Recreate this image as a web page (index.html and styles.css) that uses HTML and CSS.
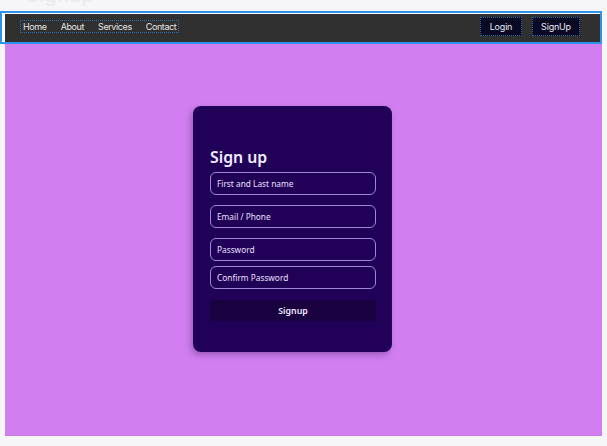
FILE: index.html
```html
<!DOCTYPE html>
<html>
<head>
<meta charset="utf-8">
<link rel="stylesheet" href="styles.css">
</head>
<body>
<div class="ghost"><span class="ghost-text">Signup</span></div>
<header class="header">
  <nav class="bar">
    <div class="links">
      <a class="link">Home</a>
      <a class="link">About</a>
      <a class="link">Services</a>
      <a class="link">Contact</a>
    </div>
    <div class="actions">
      <button class="nbtn nbtn-login">Login</button>
      <button class="nbtn nbtn-signup">SignUp</button>
    </div>
  </nav>
</header>
<main class="main">
  <form class="card">
    <h2 class="title">Sign up</h2>
    <div class="field">First and Last name</div>
    <div class="field f-gap">Email / Phone</div>
    <div class="field f-gap">Password</div>
    <div class="field f-gap2">Confirm Password</div>
    <div class="submit">Signup</div>
  </form>
</main>
</body>
</html>
```
FILE: styles.css
```css
html, body { margin: 0; padding: 0; }
body {
  background: #f6f6f8;
  width: 607px;
  height: 446px;
  overflow: hidden;
  font-family: Inter, "Liberation Sans", sans-serif;
}
.ghost {
  height: 11px;
  overflow: hidden;
  padding-left: 26px;
  display: flex;
  align-items: flex-end;
}
.ghost-text {
  font-size: 20px;
  line-height: 20px;
  margin-bottom: 6px;
  color: #ebebef;
  font-weight: 600;
}
.header {
  width: 602px;
  height: 33px;
  box-sizing: border-box;
  border: 2px solid #2f93ea;
  border-bottom-width: 2.5px;
  background: #fff;
  padding-left: 3px;
  display: flex;
}
.bar {
  flex: 1;
  background: #303030;
  display: flex;
  align-items: center;
  justify-content: space-between;
  padding: 0 20px 0 16px;
  margin-top: 1px;
}
.links {
  display: flex;
  gap: 14px;
  outline: 1px dotted #2c6ea8;
  padding: 0 2px;
  margin-top: -4px;
  height: 11px;
  align-items: center;
}
.link {
  color: #e4e4e4;
  font-size: 9px;
  letter-spacing: -0.4px;
}
.actions {
  display: flex;
  gap: 10px;
  margin-top: -4px;
}
.nbtn {
  font-family: Inter, "Liberation Sans", sans-serif;
  font-size: 9px;
  letter-spacing: -0.2px;
  color: #e8e8f0;
  background: #0b0a24;
  border: 1px dotted #2a6aa3;
  height: 19px;
  padding: 0;
}
.nbtn-login { width: 42px; }
.nbtn-signup { width: 48px; }
.main {
  width: 597px;
  height: 392px;
  margin-left: 5px;
  background: #d17ff0;
  border-bottom: 1px solid #c779e0;
  box-sizing: border-box;
  padding-top: 62px;
  padding-left: 188px;
}
.card {
  width: 199px;
  height: 246px;
  box-sizing: border-box;
  background: #210057;
  border-radius: 8px;
  box-shadow: -2px 3px 6px rgba(60, 20, 90, 0.35);
  padding: 40px 16px 0 17px;
  font-family: "Noto Sans", "Open Sans", sans-serif;
  margin: 0;
}
.title {
  margin: 0 0 4px 0;
  font-size: 15.8px;
  font-weight: 600;
  color: #f2ecff;
  line-height: 22px;
}
.field {
  height: 23px;
  box-sizing: border-box;
  border: 1px solid #9d87d6;
  border-radius: 6px;
  font-size: 8.3px;
  color: #e8e0ff;
  padding-left: 6px;
  display: flex;
  align-items: center;
}
.f-gap { margin-top: 10px; }
.f-gap2 { margin-top: 5px; }
.submit {
  margin-top: 11px;
  height: 21px;
  border-radius: 4px;
  background: #19003f;
  color: #f0ecff;
  font-size: 8.8px;
  font-weight: 600;
  display: flex;
  align-items: center;
  justify-content: center;
}
```
